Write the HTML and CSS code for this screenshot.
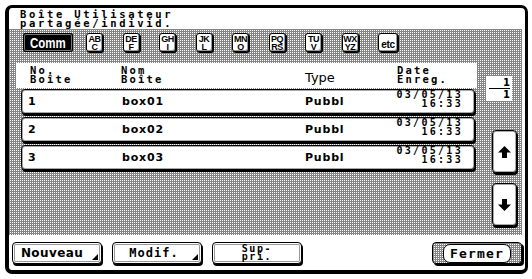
FILE: index.html
```html
<!DOCTYPE html>
<html lang="fr">
<head>
<meta charset="utf-8">
<title>Boîte Utilisateur</title>
<link rel="stylesheet" href="styles.css">
</head>
<body>
<div class="frame">
  <div class="title">Boîte Utilisateur<br>partagée/individ.</div>
  <div class="panel">
    <div class="tabs">
      <div class="tab-comm"><span>Comm</span></div>
      <div class="key"><span>AB</span><span>C</span></div>
      <div class="key"><span>DE</span><span>F</span></div>
      <div class="key"><span>GH</span><span>I</span></div>
      <div class="key"><span>JK</span><span>L</span></div>
      <div class="key"><span>MN</span><span>O</span></div>
      <div class="key"><span>PQ</span><span>RS</span></div>
      <div class="key"><span>TU</span><span>V</span></div>
      <div class="key"><span>WX</span><span>YZ</span></div>
      <div class="key key-etc"><span>etc</span></div>
    </div>
    <div class="main">
      <div class="head">
        <div class="mono">No.<br>Boîte</div>
        <div class="mono">Nom<br>Boîte</div>
        <div class="type">Type</div>
        <div class="mono">Date<br>Enreg.</div>
      </div>
      <div class="row">
        <span class="num">1</span><span class="name">box01</span><span class="kind">Pubbl</span><span class="date">03/05/13<br>16:33</span>
      </div>
      <div class="row">
        <span class="num">2</span><span class="name">box02</span><span class="kind">Pubbl</span><span class="date">03/05/13<br>16:33</span>
      </div>
      <div class="row">
        <span class="num">3</span><span class="name">box03</span><span class="kind">Pubbl</span><span class="date">03/05/13<br>16:33</span>
      </div>
    </div>
    <div class="side">
      <div class="pager"><span class="pg">1</span><span class="pg pg-total">1</span></div>
      <div class="scroll scroll-up">
        <svg width="13" height="12" viewBox="0 0 13 12"><path d="M6.5 0 L13 6.5 L9 6.5 L9 12 L4 12 L4 6.5 L0 6.5 Z" fill="#000"/></svg>
      </div>
      <div class="scroll scroll-down">
        <svg width="13" height="12" viewBox="0 0 13 12"><path d="M6.5 12 L13 5.5 L9 5.5 L9 0 L4 0 L4 5.5 L0 5.5 Z" fill="#000"/></svg>
      </div>
    </div>
  </div>
  <div class="actions">
    <div class="btn btn-sub"><span class="btn-label sans">Nouveau</span></div>
    <div class="btn btn-sub"><span class="btn-label mono-b">Modif.</span></div>
    <div class="btn"><span class="btn-label mono-s">Sup-<br>pri.</span></div>
    <div class="btn btn-close"><span class="close-label">Fermer</span></div>
  </div>
</div>
</body>
</html>
```

FILE: styles.css
```css
html, body {
  margin: 0;
  padding: 0;
  background: #fff;
}
body {
  width: 532px;
  height: 279px;
  overflow: hidden;
  font-family: "DejaVu Sans", sans-serif;
  color: #000;
}
.frame {
  margin: 5px 0 0 5px;
  width: 523px;
  height: 269px;
  box-sizing: border-box;
  border: 3px solid #000;
  border-left-width: 4px;
  border-bottom-width: 4px;
  border-radius: 7px;
  display: flex;
  flex-direction: column;
}
.title {
  font: bold 10.5px/9px "DejaVu Sans Mono", monospace;
  letter-spacing: 2.7px;
  padding: 2px 0 0 11px;
  height: 21px;
  box-sizing: border-box;
}
.panel {
  width: 513px;
  height: 206px;
  box-sizing: border-box;
  padding-top: 4px;
  background-color: #fff;
  background-image:
    linear-gradient(90deg, #858585 1px, transparent 1px),
    linear-gradient(#858585 1px, transparent 1px);
  background-size: 2px 2px;
  display: grid;
  grid-template-columns: 470px 1fr;
  grid-template-rows: 19px 1fr;
}
.tabs {
  grid-column: 1 / -1;
  display: flex;
  padding-left: 14px;
}
.tab-comm {
  width: 50px;
  height: 19px;
  box-sizing: border-box;
  background: #000;
  border-radius: 3px;
  box-shadow: inset 0 0 0 1px #000, inset 0 0 0 2px #777;
  display: flex;
  align-items: center;
  justify-content: center;
  margin-right: 13px;
}
.tab-comm span {
  display: inline-block;
  color: #fff;
  font: bold 14px/14px "Liberation Sans", sans-serif;
  transform: scaleX(0.82);
}
.key {
  width: 17px;
  height: 19px;
  box-sizing: border-box;
  background: #fff;
  border: 1px solid #000;
  border-radius: 3px;
  box-shadow: inset -1px -1px 0 #999, 1px 1px 0 #000;
  display: flex;
  flex-direction: column;
  align-items: center;
  justify-content: center;
  font: bold 9px/8px "Liberation Sans", sans-serif;
  letter-spacing: -0.6px;
  white-space: nowrap;
}
.key + .key {
  margin-left: 19.5px;
}
.key-etc {
  width: 20px;
  justify-content: flex-end;
  padding-bottom: 2px;
  font-size: 10px;
  letter-spacing: -0.3px;
}
.main {
  padding-top: 11px;
}
.head {
  margin-left: 7px;
  width: 461px;
  height: 25px;
  box-sizing: border-box;
  background: #fff;
  padding: 3px 0 0 14px;
  display: grid;
  grid-template-columns: 91px 184px 92px auto;
  margin-bottom: 1px;
}
.mono {
  font: bold 10.5px/9px "DejaVu Sans Mono", monospace;
  letter-spacing: 2.2px;
}
.type {
  font: 13px/13px "DejaVu Sans", sans-serif;
  padding-top: 5px;
}
.row {
  margin-left: 12px;
  width: 454px;
  height: 25px;
  box-sizing: border-box;
  background: #fff;
  border: 1px solid #000;
  border-radius: 4px;
  box-shadow: inset 0 0 0 1px #aaa, 1px 2px 0 #000;
  padding: 0 11px 0 6px;
  display: grid;
  grid-template-columns: 94px 183px 90px auto;
  align-items: center;
  margin-bottom: 3px;
}
.num, .name, .kind {
  font: bold 11px/12px "DejaVu Sans", sans-serif;
  letter-spacing: 0.8px;
}
.date {
  font: bold 10px/8.5px "DejaVu Sans Mono", monospace;
  letter-spacing: 2.3px;
  text-align: right;
  align-self: start;
  padding-top: 1px;
}
.side {
  padding-top: 24px;
  display: flex;
  flex-direction: column;
}
.pager {
  margin-left: 7px;
  width: 26px;
  height: 25px;
  box-sizing: border-box;
  background: #fff;
  display: flex;
  flex-direction: column;
  align-items: stretch;
  padding: 2px 2px 0 3px;
}
.pg {
  font: bold 10px/10px "DejaVu Sans", sans-serif;
  text-align: right;
  height: 10px;
}
.pg-total {
  border-top: 1px solid #000;
  padding-top: 1px;
}
.scroll {
  margin-left: 13px;
  width: 25px;
  height: 43px;
  box-sizing: border-box;
  background: #fff;
  border: 1px solid #000;
  border-radius: 4px;
  box-shadow: inset 0 0 0 1px #aaa, 1px 2px 0 #000;
  display: flex;
  align-items: center;
  justify-content: center;
}
.scroll-up {
  margin-top: 29px;
}
.scroll-down {
  margin-top: 10px;
}
.actions {
  margin-top: 7px;
  display: flex;
  padding: 0 3px;
}
.btn {
  position: relative;
  width: 90px;
  height: 22px;
  box-sizing: border-box;
  background: #fff;
  border: 1px solid #000;
  border-radius: 4px;
  box-shadow: inset 0 0 0 1px #fff, inset 0 0 0 2px #999, 1px 2px 0 #000;
  display: flex;
  align-items: center;
  justify-content: center;
  margin-right: 10px;
}
.btn-sub::after {
  content: "";
  position: absolute;
  right: 3px;
  bottom: 3px;
  width: 0;
  height: 0;
  border-left: 6px solid transparent;
  border-bottom: 6px solid #000;
}
.sans {
  font: bold 12px/12px "DejaVu Sans", sans-serif;
  letter-spacing: 0.4px;
  margin-left: -10px;
}
.mono-b {
  font: bold 12px/12px "DejaVu Sans Mono", monospace;
  letter-spacing: 1px;
  margin-left: -6px;
}
.mono-s {
  font: bold 10px/8.5px "DejaVu Sans Mono", monospace;
  letter-spacing: 1.6px;
}
.btn-close {
  margin-left: auto;
  margin-right: 0;
  background-color: #fff;
  background-image:
    linear-gradient(90deg, #858585 1px, transparent 1px),
    linear-gradient(#858585 1px, transparent 1px);
  background-size: 2px 2px;
  box-shadow: 2px 2px 0 #000;
}
.close-label {
  background: #fff;
  border: 1px solid #000;
  border-radius: 7px;
  padding: 2px 6px 1px;
  font: bold 13px/14px "DejaVu Sans Mono", monospace;
  letter-spacing: 1.2px;
}
```
